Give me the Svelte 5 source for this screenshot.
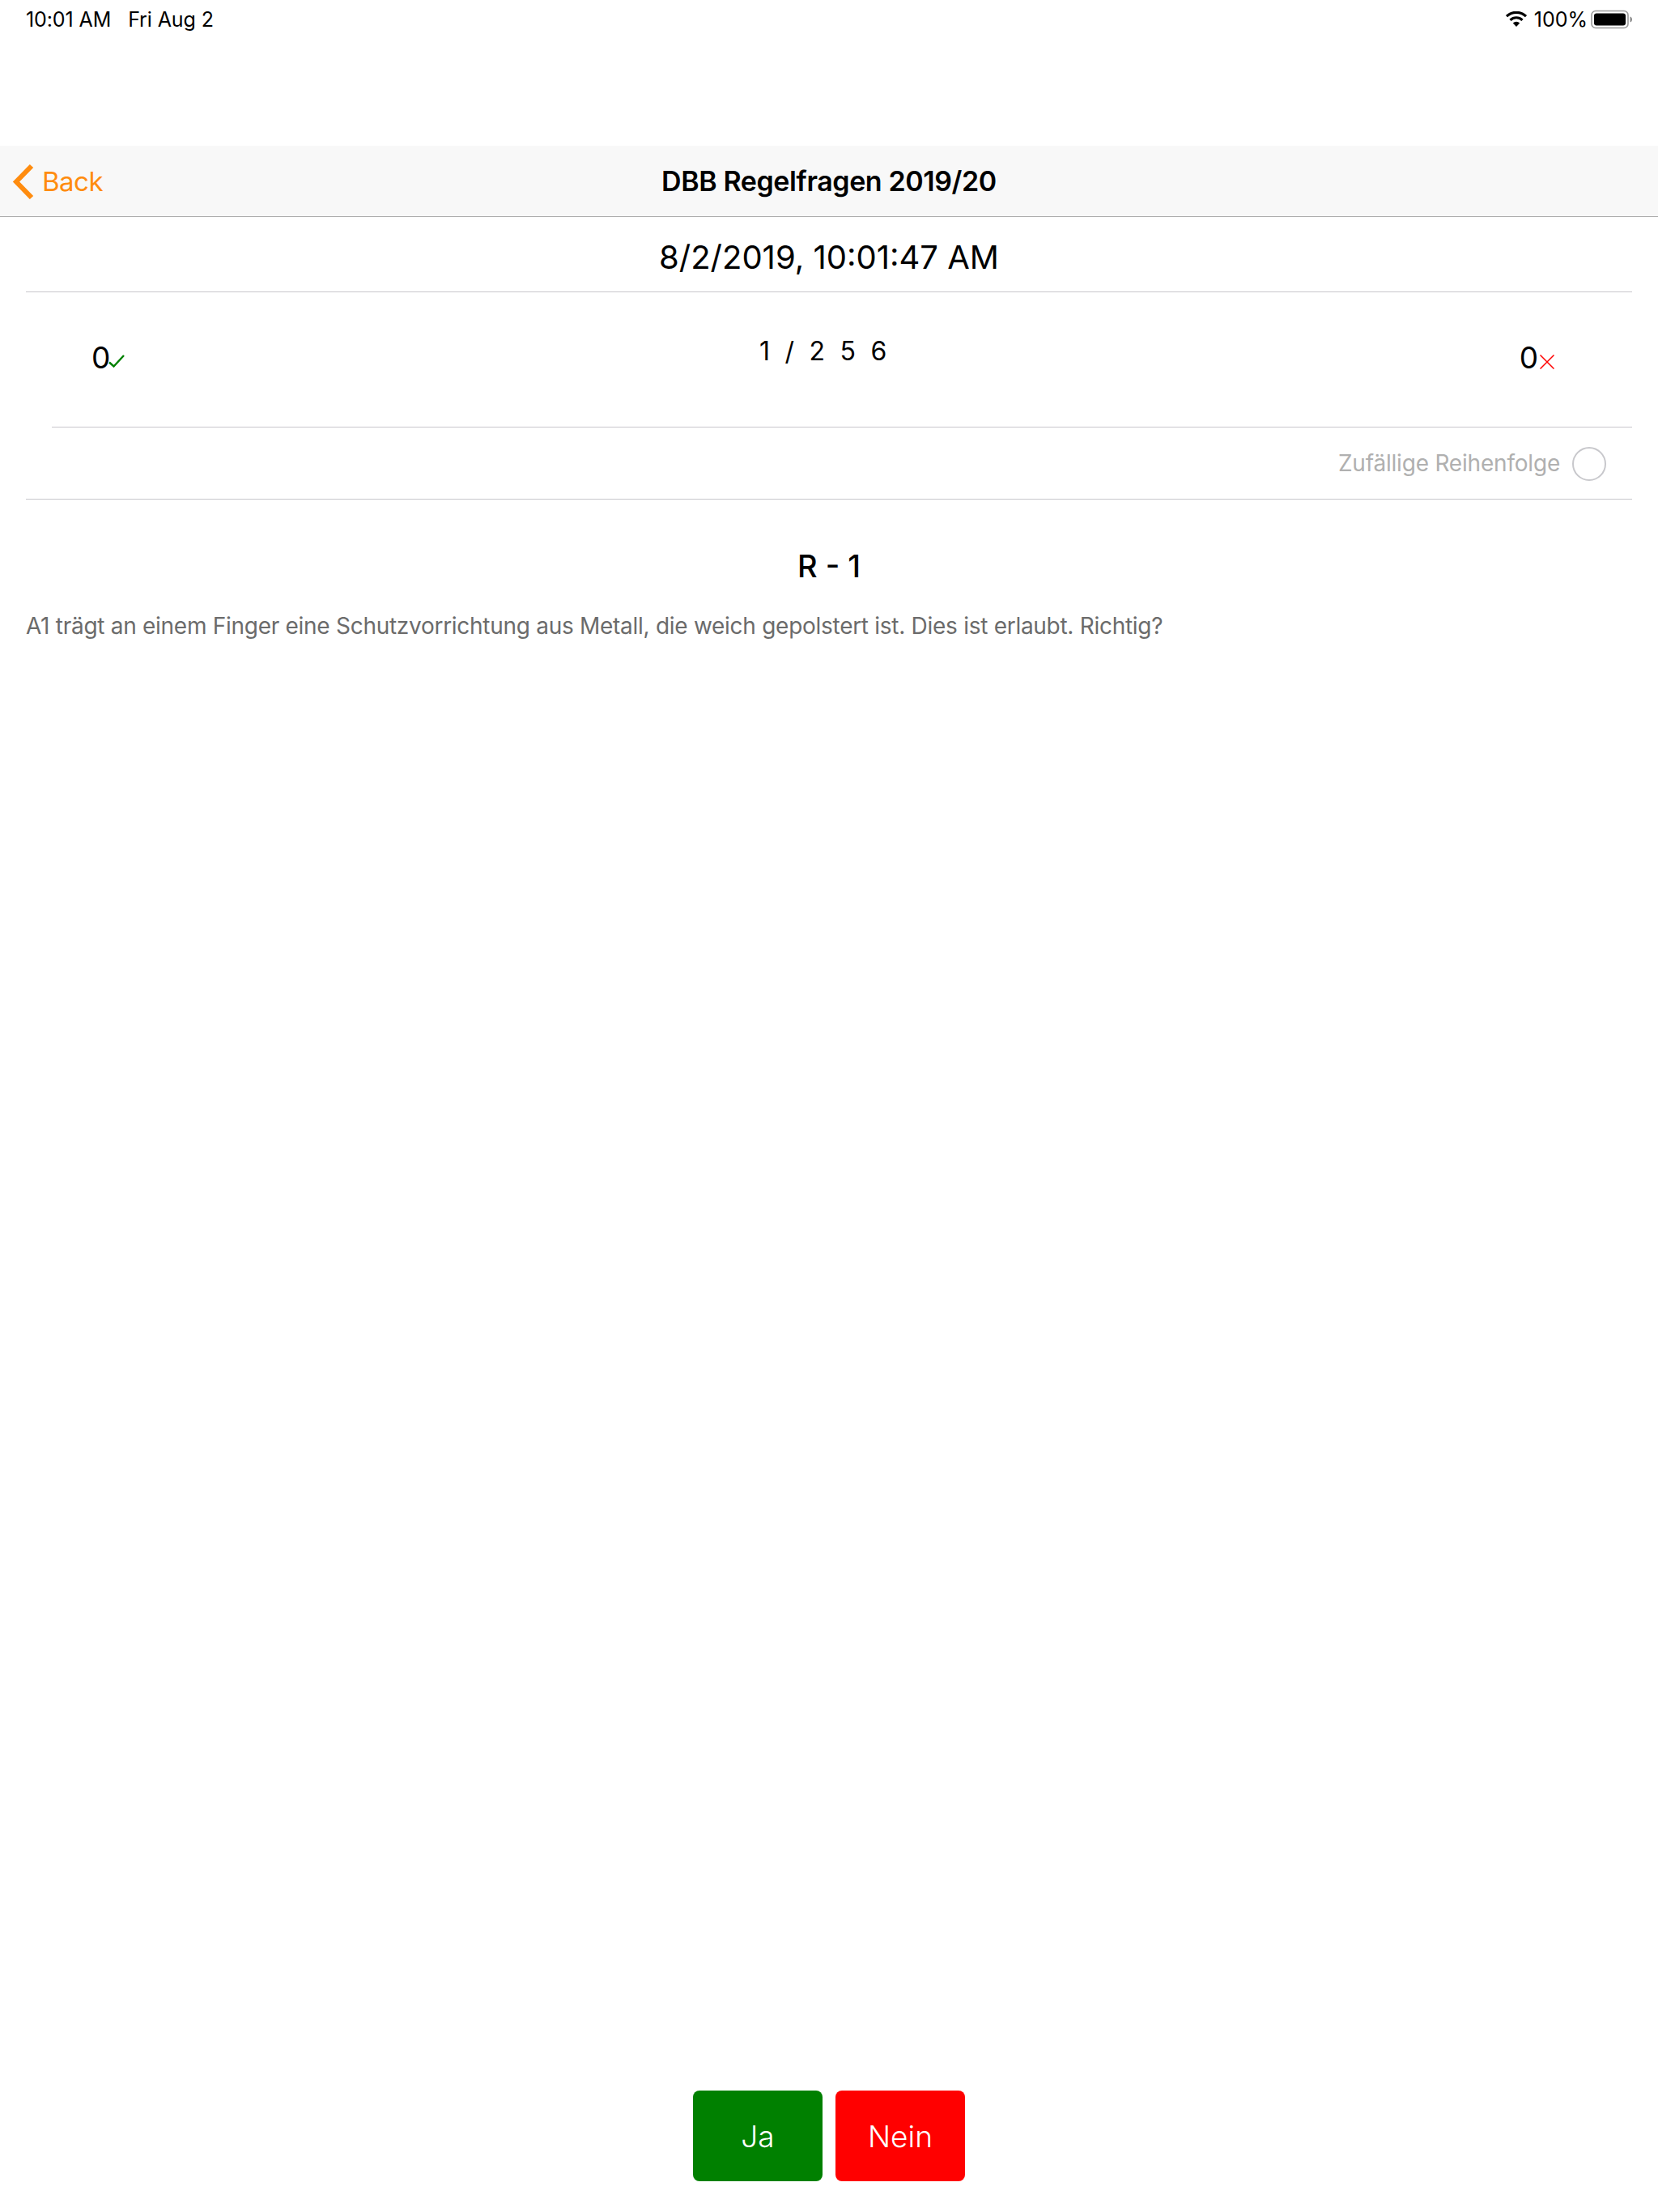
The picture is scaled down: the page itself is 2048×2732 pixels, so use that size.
<script>
  const correct = 0;
  const wrong = 0;
</script>

<div class="page">
  <div class="status">
    <div class="status-left"><span>10:01 AM</span><span>Fri Aug 2</span></div>
    <div class="status-right">
      <svg class="wifi" width="28" height="20" viewBox="0 0 28 20">
        <path d="M14 19 9.800 14.400a6 6 0 0 1 8.400 0Z" fill="#000"/>
        <path d="M6.500 10.800a10.800 10.800 0 0 1 15 0" fill="none" stroke="#000" stroke-width="3.200"/>
        <path d="M2 6.200a17.200 17.200 0 0 1 24 0" fill="none" stroke="#000" stroke-width="3.200"/>
      </svg>
      <span>100%</span>
      <svg class="battery" width="54" height="24" viewBox="0 0 54 24">
        <rect x="1" y="1.500" width="45" height="21" rx="5" fill="none" stroke="#9a9a9a" stroke-width="1.600"/>
        <rect x="4" y="4.500" width="39" height="15" rx="3" fill="#000"/>
        <path d="M48.500 8.500c1.800.5 2.500 2 2.500 3.500s-.7 3-2.500 3.500Z" fill="#8a8a8a"/>
      </svg>
    </div>
  </div>

  <header class="nav">
    <div class="back">
      <svg width="28" height="44" viewBox="0 0 28 44"><path d="M25 3 6 22.500 25 42" fill="none" stroke="#ff8c0f" stroke-width="6"/></svg>
      <span>Back</span>
    </div>
    <div class="title">DBB Regelfragen 2019/20</div>
  </header>

  <div class="date">8/2/2019, 10:01:47 AM</div>

  <div class="score-row">
    <div class="score left">
      <span class="num">{correct}</span>
      <svg width="20" height="16" viewBox="0 0 20 16"><path d="M1 9.500 6.500 14.500 19 1" fill="none" stroke="#008000" stroke-width="2.400"/></svg>
    </div>
    <div class="count">1 / 2 5 6</div>
    <div class="score right">
      <span class="num">{wrong}</span>
      <svg width="18" height="18" viewBox="0 0 18 18"><path d="M.5.5 17.500 17.500M17.500.5 .5 17.500" fill="none" stroke="#ff0000" stroke-width="1.500"/></svg>
    </div>
  </div>

  <div class="random">
    <span>Zufällige Reihenfolge</span>
    <div class="radio"></div>
  </div>

  <main class="question">
    <h1>R - 1</h1>
    <p>A1 trägt an einem Finger eine Schutzvorrichtung aus Metall, die weich gepolstert ist. Dies ist erlaubt. Richtig?</p>
  </main>

  <footer class="actions">
    <button class="yes">Ja</button>
    <button class="no">Nein</button>
  </footer>
</div>

<style>
  :global(body) {
    margin: 0;
    background: #fff;
  }
  .page {
    height: 2732px;
    display: flex;
    flex-direction: column;
    font-family: Inter, "Liberation Sans", sans-serif;
    color: #000;
    overflow: hidden;
  }
  .status {
    height: 180px;
    box-sizing: border-box;
    padding: 10px 29px 0 32px;
    display: flex;
    justify-content: space-between;
    align-items: flex-start;
    font-size: 25px;
    line-height: 28px;
  }
  .status-left {
    display: flex;
    gap: 21px;
    letter-spacing: -0.1px;
  }
  .status-right {
    display: flex;
    align-items: center;
    gap: 8px;
  }
  .battery {
    margin-left: -4px;
  }
  .nav {
    position: relative;
    height: 88px;
    box-sizing: border-box;
    background: #f8f8f8;
    border-bottom: 1px solid #acacac;
    display: flex;
    align-items: center;
    justify-content: center;
  }
  .back {
    position: absolute;
    left: 14px;
    top: 0;
    bottom: 0;
    display: flex;
    align-items: center;
    gap: 10px;
    color: #ff8c0f;
    font-size: 33px;
    letter-spacing: -0.5px;
  }
  .title {
    font-size: 34px;
    font-weight: 600;
    letter-spacing: -0.4px;
  }
  .date {
    margin-left: 32px;
    margin-right: 32px;
    height: 93px;
    box-sizing: border-box;
    padding-top: 6px;
    border-bottom: 1px solid #c8c7cc;
    display: flex;
    align-items: center;
    justify-content: center;
    font-size: 40px;
  }
  .score-row {
    margin-left: 64px;
    margin-right: 32px;
    height: 167px;
    box-sizing: border-box;
    border-bottom: 1px solid #c8c7cc;
    display: grid;
    grid-template-columns: 1fr auto 1fr;
    padding: 0 96px 0 49px;
  }
  .score {
    display: flex;
    align-items: flex-start;
    gap: 0;
    padding-top: 59px;
    font-size: 37px;
    line-height: 44px;
  }
  .left svg {
    margin-left: -2px;
  }
  .score svg {
    margin-top: 18px;
  }
  .right svg {
    margin-left: 2px;
  }
  .right {
    justify-content: flex-end;
  }
  .count {
    padding-top: 53px;
    margin-left: 5px;
    font-size: 32px;
    line-height: 40px;
    letter-spacing: 4.750px;
  }
  .random {
    margin-left: 32px;
    margin-right: 32px;
    height: 89px;
    box-sizing: border-box;
    border-bottom: 1px solid #c8c7cc;
    display: flex;
    align-items: center;
    justify-content: flex-end;
    gap: 15px;
    padding-right: 32px;
    color: #b0b0b0;
    font-size: 28px;
    letter-spacing: -0.2px;
  }
  .radio {
    width: 42px;
    height: 42px;
    box-sizing: border-box;
    border: 2px solid #c8c8cc;
    border-radius: 50%;
    margin-top: 2px;
  }
  .question {
    padding: 0 32px;
    flex: 1;
  }
  h1 {
    margin: 58px 0 0;
    text-align: center;
    font-size: 38px;
    line-height: 48px;
    font-weight: 500;
  }
  p {
    margin: 32px 0 0;
    font-size: 28px;
    line-height: 36px;
    letter-spacing: -0.28px;
    color: #6b6b6b;
  }
  .actions {
    display: flex;
    justify-content: center;
    gap: 16px;
    padding-bottom: 38px;
  }
  button {
    width: 160px;
    height: 112px;
    border: none;
    border-radius: 8px;
    color: #fff;
    font-family: inherit;
    font-size: 37px;
    font-weight: 300;
    padding: 0;
  }
  .yes {
    background: #008000;
  }
  .no {
    background: #ff0000;
  }
</style>
